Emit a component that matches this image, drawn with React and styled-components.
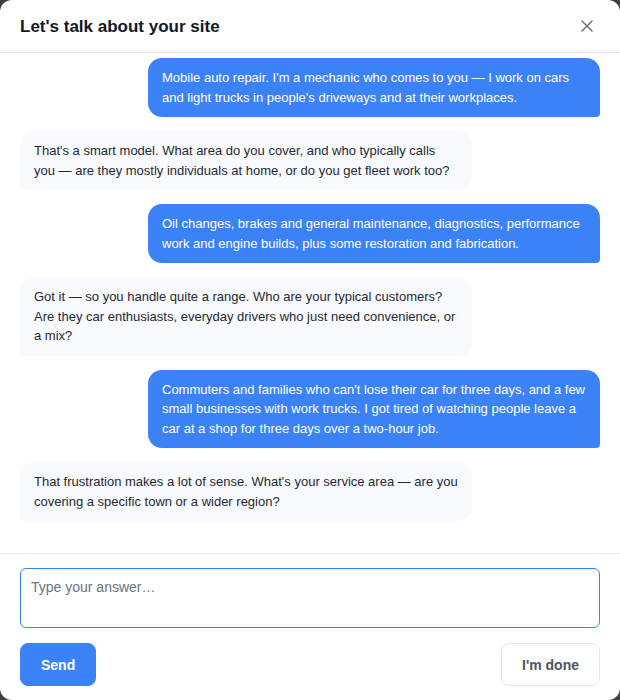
import React, { useState } from 'react';
import styled, { createGlobalStyle } from 'styled-components';

const GlobalStyle = createGlobalStyle`
  html, body {
    margin: 0;
    padding: 0;
    background: #3f3f46;
  }
  * {
    box-sizing: border-box;
  }
  body {
    font-family: 'Liberation Sans', Arial, sans-serif;
  }
`;

const Modal = styled.div`
  width: 620px;
  height: 700px;
  background: #ffffff;
  border-radius: 12px;
  display: flex;
  flex-direction: column;
  overflow: hidden;
`;

const Header = styled.div`
  height: 53px;
  flex-shrink: 0;
  display: flex;
  align-items: center;
  justify-content: space-between;
  padding: 0 20px;
  border-bottom: 1px solid #e5e7eb;
`;

const Title = styled.h2`
  margin: 0;
  font-size: 17px;
  font-weight: 700;
  color: #111827;
  padding-top: 1px;
`;

const CloseButton = styled.button`
  border: none;
  background: none;
  padding: 6px;
  margin-right: 1px;
  display: flex;
  color: #6b7280;
  cursor: pointer;
`;

const Messages = styled.div`
  flex: 1;
  display: flex;
  flex-direction: column;
  gap: 14px;
  padding: 5px 20px 32px;
  overflow: hidden;
`;

const Bubble = styled.div`
  width: 452px;
  padding: 10px 14px;
  font-size: 13px;
  line-height: 1.5;
  border-radius: ${(p) => (p.$user ? '14px 14px 4px 14px' : '14px 14px 14px 4px')};
  align-self: ${(p) => (p.$user ? 'flex-end' : 'flex-start')};
  background: ${(p) => (p.$user ? '#3b82f6' : '#f8fafc')};
  color: ${(p) => (p.$user ? '#ffffff' : '#1f2937')};
`;

const Footer = styled.div`
  flex-shrink: 0;
  border-top: 1px solid #e5e7eb;
  padding: 14px 20px 14px;
  display: flex;
  flex-direction: column;
  gap: 15px;
`;

const Answer = styled.textarea`
  width: 100%;
  height: 60px;
  resize: none;
  border: 1px solid #3b82f6;
  border-radius: 6px;
  padding: 10px;
  font-family: 'Liberation Sans', Arial, sans-serif;
  font-size: 14px;
  color: #111827;
  outline: none;
  &::placeholder {
    color: #6b7280;
  }
`;

const Actions = styled.div`
  display: flex;
  justify-content: space-between;
  align-items: center;
`;

const Button = styled.button`
  height: 43px;
  padding: 0 20px;
  border-radius: 8px;
  font-family: 'Liberation Sans', Arial, sans-serif;
  font-size: 14px;
  font-weight: 700;
  cursor: pointer;
  border: 1px solid ${(p) => (p.$primary ? '#3b82f6' : '#e5e7eb')};
  background: ${(p) => (p.$primary ? '#3b82f6' : '#ffffff')};
  color: ${(p) => (p.$primary ? '#ffffff' : '#4b5563')};
`;

const messages = [
  { user: true, text: "Mobile auto repair. I'm a mechanic who comes to you — I work on cars and light trucks in people's driveways and at their workplaces." },
  { user: false, text: "That's a smart model. What area do you cover, and who typically calls you — are they mostly individuals at home, or do you get fleet work too?" },
  { user: true, text: 'Oil changes, brakes and general maintenance, diagnostics, performance work and engine builds, plus some restoration and fabrication.' },
  { user: false, text: 'Got it — so you handle quite a range. Who are your typical customers? Are they car enthusiasts, everyday drivers who just need convenience, or a mix?' },
  { user: true, text: "Commuters and families who can't lose their car for three days, and a few small businesses with work trucks. I got tired of watching people leave a car at a shop for three days over a two-hour job." },
  { user: false, text: "That frustration makes a lot of sense. What's your service area — are you covering a specific town or a wider region?" },
];

const App = () => {
  const [answer, setAnswer] = useState('');
  return (
    <>
      <GlobalStyle />
      <Modal>
        <Header>
          <Title>Let's talk about your site</Title>
          <CloseButton aria-label='Close'>
            <svg width='12' height='12' viewBox='0 0 12 12' fill='none' stroke='currentColor' strokeWidth='1.5' strokeLinecap='round'>
              <path d='M1 1l10 10M11 1L1 11' />
            </svg>
          </CloseButton>
        </Header>
        <Messages>
          {messages.map((m, i) => (
            <Bubble key={i} $user={m.user}>
              {m.text}
            </Bubble>
          ))}
        </Messages>
        <Footer>
          <Answer
            placeholder='Type your answer…'
            value={answer}
            onChange={(e) => setAnswer(e.target.value)}
          />
          <Actions>
            <Button $primary>Send</Button>
            <Button>I'm done</Button>
          </Actions>
        </Footer>
      </Modal>
    </>
  );
};

export default App;
